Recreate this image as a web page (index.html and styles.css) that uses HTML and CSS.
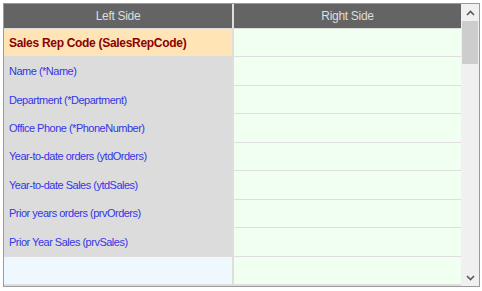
FILE: index.html
```html
<!DOCTYPE html>
<html>
<head>
<meta charset="utf-8">
<link rel="stylesheet" href="styles.css">
</head>
<body>
<div class="frame">
  <div class="grid">
    <div class="hd">Left Side</div>
    <div class="hd">Right Side</div>
    <div class="lc key">Sales Rep Code (SalesRepCode)</div>
    <div class="rc"></div>
    <div class="lc">Name (*Name)</div>
    <div class="rc"></div>
    <div class="lc">Department (*Department)</div>
    <div class="rc"></div>
    <div class="lc">Office Phone (*PhoneNumber)</div>
    <div class="rc"></div>
    <div class="lc">Year-to-date orders (ytdOrders)</div>
    <div class="rc"></div>
    <div class="lc">Year-to-date Sales (ytdSales)</div>
    <div class="rc"></div>
    <div class="lc">Prior years orders (prvOrders)</div>
    <div class="rc"></div>
    <div class="lc">Prior Year Sales (prvSales)</div>
    <div class="rc"></div>
    <div class="lc empty"></div>
    <div class="rc"></div>
  </div>
  <div class="scroll">
    <div class="arrow">
      <svg width="9" height="6" viewBox="0 0 9 6"><path d="M1 5 L4.5 1.5 L8 5" fill="none" stroke="#5a5a5a" stroke-width="1.6"/></svg>
    </div>
    <div class="thumb"></div>
    <div class="track"></div>
    <div class="arrow">
      <svg width="9" height="6" viewBox="0 0 9 6"><path d="M1 1 L4.5 4.5 L8 1" fill="none" stroke="#5a5a5a" stroke-width="1.6"/></svg>
    </div>
  </div>
</div>
</body>
</html>
```
FILE: styles.css
```css
html, body {
  margin: 0;
  padding: 0;
  background: #ffffff;
}
.frame {
  margin: 3px 0 0 3px;
  width: 475px;
  height: 282px;
  border: 1px solid #9a9a9a;
  display: flex;
  font-family: "Liberation Sans", Arial, sans-serif;
  font-size: 11px;
}
.grid {
  width: 457px;
  display: grid;
  grid-template-columns: 228px 227px;
  grid-template-rows: 24px repeat(9, 1fr);
  column-gap: 2px;
  row-gap: 1px;
  padding-bottom: 2px;
  background: #dedede;
}
.hd {
  background: #646464;
  color: #dedede;
  font-size: 12px;
  letter-spacing: -0.3px;
  display: flex;
  align-items: center;
  justify-content: center;
}
.lc {
  background: #dcdcdc;
  color: #3535e8;
  letter-spacing: -0.5px;
  display: flex;
  align-items: center;
  padding-left: 5px;
}
.lc.key {
  background: #ffe4b5;
  color: #8b0000;
  font-weight: bold;
  font-size: 12px;
  letter-spacing: -0.3px;
}
.lc.empty {
  background: #f0f8ff;
}
.rc {
  background: #f0fff0;
}
.scroll {
  width: 18px;
  background: #f0f0f0;
  display: flex;
  flex-direction: column;
  align-items: center;
}
.arrow {
  height: 17px;
  width: 18px;
  display: flex;
  align-items: center;
  justify-content: center;
}
.thumb {
  width: 16px;
  height: 43px;
  background: #cdcdcd;
}
.track {
  flex: 1;
}
```
